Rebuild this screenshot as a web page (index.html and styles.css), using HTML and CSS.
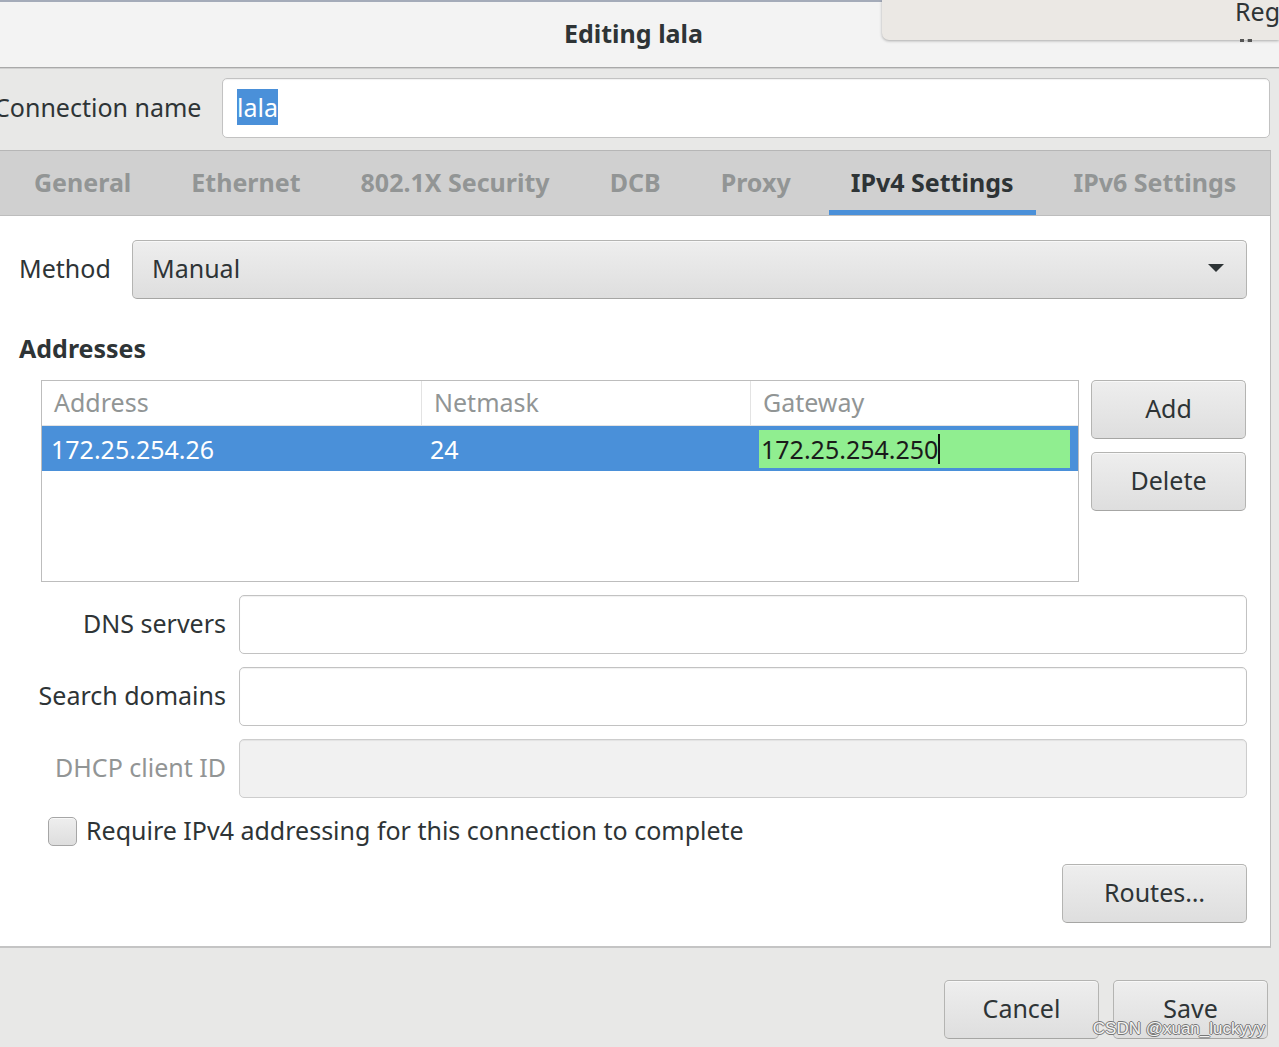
FILE: index.html
```html
<!DOCTYPE html>
<html lang="en">
<head>
  <meta charset="UTF-8" />
  <title>Editing lala</title>
  <link rel="stylesheet" href="styles.css">
</head>
<body>
  <div class="window">
    <header class="titlebar">
      <h1>Editing lala</h1>
      <div class="popup"><span>Reg</span></div>
      <span class="peek"></span>
    </header>

    <div class="name-row">
      <label>Connection name</label>
      <div class="entry"><span class="sel">lala</span></div>
    </div>

    <div class="notebook">
      <nav class="tabs">
        <span class="tab">General</span>
        <span class="tab">Ethernet</span>
        <span class="tab">802.1X Security</span>
        <span class="tab">DCB</span>
        <span class="tab">Proxy</span>
        <span class="tab active">IPv4 Settings</span>
        <span class="tab">IPv6 Settings</span>
      </nav>

      <section class="page">
        <div class="method-row">
          <label>Method</label>
          <div class="combo">
            <span>Manual</span>
            <i class="arrow"></i>
          </div>
        </div>

        <h2>Addresses</h2>

        <div class="addresses">
          <div class="table">
            <div class="thead">
              <div class="th">Address</div>
              <div class="th">Netmask</div>
              <div class="th">Gateway</div>
            </div>
            <div class="tr selected">
              <div class="td">172.25.254.26</div>
              <div class="td">24</div>
              <div class="td"><div class="edit">172.25.254.250<span class="caret"></span></div></div>
            </div>
          </div>
          <div class="side-buttons">
            <button class="btn">Add</button>
            <button class="btn">Delete</button>
          </div>
        </div>

        <div class="form">
          <label>DNS servers</label>
          <div class="entry"></div>
          <label>Search domains</label>
          <div class="entry"></div>
          <label class="dim">DHCP client ID</label>
          <div class="entry disabled"></div>
        </div>

        <div class="check-row">
          <span class="checkbox"></span>
          <span>Require IPv4 addressing for this connection to complete</span>
        </div>

        <div class="routes-row">
          <button class="btn routes">Routes…</button>
        </div>
      </section>
    </div>

    <footer class="actions">
      <button class="btn">Cancel</button>
      <button class="btn">Save</button>
    </footer>

    <div class="watermark">CSDN @xuan_luckyyy</div>
  </div>
</body>
</html>
```

FILE: styles.css
```css
* {
  margin: 0; padding: 0; box-sizing: border-box;
}
body {
  width: 1279px;
  height: 1047px;
  overflow: hidden;
  background: #e8e8e7;
  font-family: "Noto Sans", "Open Sans", sans-serif;
  font-size: 25px;
  color: #2e3436;
}
.window {
  position: relative;
  height: 1047px;
  display: flex;
  flex-direction: column;
}
.window > * {
  flex-shrink: 0;
}
label, .tab, .btn {
  white-space: nowrap;
}

/* title bar */
.titlebar {
  position: relative;
  height: 68px;
  background: #f3f3f3;
  border-top: 2px solid #a4abb9;
  border-bottom: 1px solid #a9a9a9;
  box-shadow: 0 1px 0 #d0d0d0;
  display: flex;
  justify-content: center;
  align-items: center;
}
.titlebar h1 {
  font-size: 25px;
  font-weight: bold;
  margin-top: -3px;
  margin-left: -12px;
}
.popup {
  position: absolute;
  top: -2px; left: 882px; right: 0;
  height: 40px;
  background: #ebe8e4;
  border-bottom-left-radius: 7px;
  box-shadow: 0 1px 3px rgba(0,0,0,0.3);
  overflow: hidden;
}
.popup span {
  position: absolute;
  left: 353px; top: -6px;
  color: #2e3436;
}
.peek {
  position: absolute;
  left: 1240px; top: 37px;
  width: 12px;
  border-top: 3px dotted #555;
}

/* connection name */
.name-row {
  height: 82px;
  display: flex;
  align-items: flex-start;
  padding: 10px 9px 0 0;
}
.name-row label {
  margin-left: -6px;
  width: 228px;
  line-height: 58px;
}
.entry {
  height: 60px;
  flex: 1;
  background: #fff;
  border: 1px solid #c2c2c2;
  border-radius: 5px;
  box-shadow: inset 0 1px 1px rgba(0,0,0,0.06);
  display: flex;
  align-items: center;
  padding-left: 14px;
}
.entry.disabled {
  background: #f1f1f1;
  border-color: #cdcdcd;
}
.sel {
  background: #4a90d9;
  color: #fff;
  line-height: 36px;
  margin-top: -2px;
}

/* notebook */
.notebook {
  width: 1271px;
  border-top: 1px solid #b6b6b6;
  border-right: 1px solid #bdbdbd;
  border-bottom: 2px solid #c4c4c4;
  background: #fff;
}
.tabs {
  height: 65px;
  background: #d0d0d0;
  border-bottom: 1px solid #bdbdbd;
  display: flex;
  gap: 16px;
  padding-left: 12px;
}
.tab {
  padding: 3px 22px 0;
  font-weight: bold;
  color: #929595;
  display: flex;
  align-items: center;
  border-bottom: 5px solid transparent;
}
.tab.active {
  color: #2e3436;
  border-bottom-color: #4a90d9;
}

.page {
  padding: 24px 23px 23px 19px;
}
.method-row {
  display: flex;
  align-items: center;
}
.method-row label {
  width: 113px;
  margin-top: -3px;
}
.combo, .btn, .checkbox {
  background: linear-gradient(#eeeeee, #dedede);
  border: 1px solid #b4b4b2;
  border-bottom-color: #a6a6a4;
  border-radius: 5px;
  box-shadow: 0 1px 0 rgba(255,255,255,0.6) inset;
}
.combo {
  flex: 1;
  height: 59px;
  display: flex;
  align-items: center;
  justify-content: space-between;
  padding: 0 22px 3px 19px;
}
.arrow {
  width: 0; height: 0;
  border-left: 8px solid transparent;
  border-right: 8px solid transparent;
  border-top: 8px solid #2e3436;
}
h2 {
  font-size: 25px;
  font-weight: bold;
  line-height: 34px;
  margin-top: 32px;
  padding-bottom: 2px;
}

/* address table */
.addresses {
  margin-top: 13px;
  display: flex;
  gap: 12px;
  padding-left: 22px;
}
.table {
  width: 1038px;
  height: 202px;
  border: 1px solid #bdbdbd;
}
.thead, .tr {
  display: grid;
  grid-template-columns: 379px 329px 1fr;
  height: 45px;
}
.thead {
  border-bottom: 1px solid #e3e3e3;
}
.th {
  color: #919595;
  padding: 0 0 3px 12px;
  display: flex;
  align-items: center;
  border-left: 1px solid #e3e3e3;
}
.th:first-child {
  border-left: none;
}
.tr.selected {
  background: #4a90d9;
  color: #fff;
}
.td {
  display: flex;
  align-items: center;
  padding-left: 9px;
}
.td .edit {
  width: 311px;
  height: 38px;
  background: #90ee90;
  color: #1a1a1a;
  display: flex;
  align-items: center;
  padding-left: 2px;
}
.caret {
  width: 2px;
  height: 30px;
  background: #111;
}
.side-buttons {
  display: flex;
  flex-direction: column;
  gap: 13px;
}
.btn {
  font-family: inherit;
  font-size: 25px;
  color: #2e3436;
  width: 155px;
  height: 59px;
  padding-bottom: 3px;
}

/* form */
.form {
  margin-top: 13px;
  display: grid;
  grid-template-columns: 185px 1fr;
  column-gap: 13px;
  row-gap: 13px;
  padding-left: 22px;
}
.form label {
  text-align: right;
  line-height: 56px;
  direction: rtl;
}
.form .entry {
  height: 59px;
}
.form label.dim {
  color: #929595;
}
.check-row {
  margin-top: 17px;
  height: 32px;
  display: flex;
  align-items: center;
  gap: 9px;
  padding-left: 29px;
}
.check-row span:last-child {
  margin-top: -3px;
}
.checkbox {
  width: 29px;
  height: 29px;
  border-color: #a6a6a6;
}
.routes-row {
  margin-top: 17px;
  display: flex;
  justify-content: flex-end;
}
.btn.routes {
  width: 185px;
}

/* dialog buttons */
.actions {
  padding: 32px 11px 0 0;
  display: flex;
  justify-content: flex-end;
  gap: 14px;
}
.actions .btn {
  width: 155px;
  height: 59px;
}
.watermark {
  position: absolute;
  right: 14px;
  bottom: 8px;
  font-family: "Liberation Sans", Arial, sans-serif;
  font-size: 17px;
  color: #f2f2f2;
  text-shadow: -1px 0 #777, 1px 0 #777, 0 -1px #777, 0 1px #777;
}
```
